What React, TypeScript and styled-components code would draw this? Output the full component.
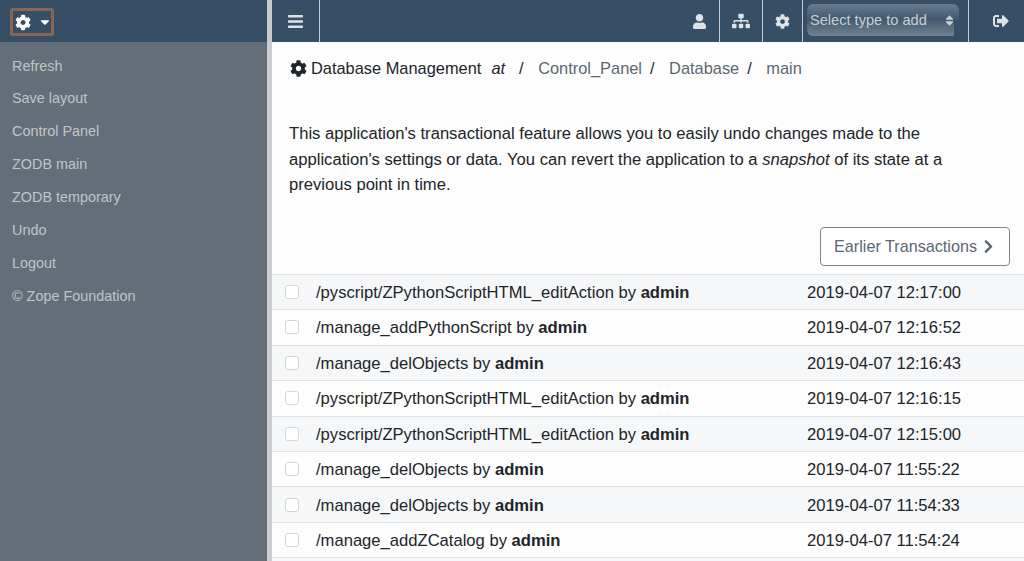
import React from "react";
import styled, { createGlobalStyle } from "styled-components";
import {
  FaBars,
  FaCaretDown,
  FaChevronRight,
  FaCog,
  FaSignOutAlt,
  FaSitemap,
  FaSort,
  FaUser,
} from "react-icons/fa";

const GlobalStyle = createGlobalStyle`
  html, body {
    margin: 0;
    height: 100%;
    overflow: hidden;
    background: #fff;
    font-family: "Liberation Sans", Arial, sans-serif;
    color: #212529;
  }
  * { box-sizing: border-box; }
`;

const Page = styled.div`
  display: flex;
  width: 1024px;
  height: 561px;
  overflow: hidden;
`;

const Sidebar = styled.aside`
  width: 267px;
  flex: none;
  background: #646e78;
`;

const SideHeader = styled.div`
  display: flex;
  align-items: center;
  height: 42px;
  padding: 2px 0 0 10px;
  background: #364e66;
`;

const MenuToggle = styled.button`
  display: flex;
  align-items: center;
  gap: 8px;
  width: 44px;
  height: 28px;
  padding: 0 0 0 2px;
  color: #fff;
  background: transparent;
  border: 3px solid #8a6552;
  border-radius: 3px;
`;

const SideMenu = styled.nav`
  display: flex;
  flex-direction: column;
  padding: 7.5px 0 0 12px;
`;

const SideLink = styled.a`
  height: 32.9px;
  font-size: 14.4px;
  line-height: 33px;
  color: #c1c5c9;
`;

const Splitter = styled.div`
  width: 5px;
  flex: none;
  background: #c9cbcd;
`;

const Main = styled.main`
  flex: 1;
  min-width: 0;
`;

const TopBar = styled.header`
  display: flex;
  align-items: stretch;
  height: 42px;
  background: #364e66;
  color: #dfe3e7;
`;

const BarButton = styled.div<{ $width: number; $divider?: boolean }>`
  display: flex;
  align-items: center;
  justify-content: center;
  width: ${(p) => p.$width}px;
  flex: none;
  font-size: 15px;
  border-right: ${(p) => (p.$divider ? "1px solid #c5ccd3" : "none")};
`;

const LogoutButton = styled(BarButton)`
  padding-left: 8px;
`;

const Spacer = styled.div`
  flex: 1;
`;

const TypeSelect = styled.div`
  position: relative;
  display: flex;
  align-items: center;
  justify-content: space-between;
  align-self: flex-start;
  width: 152px;
  height: 32px;
  margin: 4px 9px 0 4px;
  padding: 0 3px 0 3px;
  border-radius: 6px;
  font-size: 14.6px;
  color: #c9ced3;
  background: linear-gradient(#6a7c8f 0%, #3f566d 50%, #475d74 52%, #71828f 100%);

  &::after {
    content: "";
    position: absolute;
    right: 0;
    bottom: 0;
    width: 5px;
    height: 50%;
    background: #364e66;
  }

  svg {
    font-size: 13px;
  }
`;

const Content = styled.div`
  background: #fdfdfd;
`;

const Breadcrumbs = styled.div`
  display: flex;
  align-items: center;
  height: 53px;
  padding: 0 0 0 18px;
  font-size: 16.4px;
  color: #212529;

  svg {
    margin-right: 4px;
    font-size: 17px;
  }
`;

const Crumb = styled.span`
  color: #5b6771;
`;

const At = styled.em`
  margin: 0 6px 0 10px;
`;

const Slash = styled.span`
  margin: 0 14.5px 0 8px;
`;

const Intro = styled.p`
  margin: 26px 0 0;
  padding: 0 40px 0 17px;
  font-size: 16.62px;
  line-height: 25.6px;
`;

const Actions = styled.div`
  display: flex;
  justify-content: flex-end;
  padding: 29px 14px 8px 0;
`;

const EarlierButton = styled.button`
  display: flex;
  align-items: center;
  justify-content: space-between;
  width: 190px;
  height: 39px;
  padding: 0 13px;
  font: inherit;
  font-size: 16.2px;
  color: #5b6771;
  background: #fff;
  border: 1px solid #7d8790;
  border-radius: 4px;

  svg {
    font-size: 15px;
  }
`;

const Row = styled.div<{ $striped: boolean }>`
  display: flex;
  align-items: center;
  height: 35.45px;
  padding: 2px 0 0 13px;
  font-size: 16.6px;
  background: ${(p) => (p.$striped ? "#f6f7f8" : "#fdfdfd")};
  border-top: 1px solid #dfe2e5;
`;

const Check = styled.span`
  width: 14px;
  height: 14px;
  flex: none;
  margin-top: -2px;
  background: #fff;
  border: 1px solid #d4d7da;
  border-radius: 3px;
`;

const Action = styled.span`
  width: 491px;
  flex: none;
  margin-left: 17px;
`;

const transactions = [
  ["/pyscript/ZPythonScriptHTML_editAction", "2019-04-07 12:17:00"],
  ["/manage_addPythonScript", "2019-04-07 12:16:52"],
  ["/manage_delObjects", "2019-04-07 12:16:43"],
  ["/pyscript/ZPythonScriptHTML_editAction", "2019-04-07 12:16:15"],
  ["/pyscript/ZPythonScriptHTML_editAction", "2019-04-07 12:15:00"],
  ["/manage_delObjects", "2019-04-07 11:55:22"],
  ["/manage_delObjects", "2019-04-07 11:54:33"],
  ["/manage_addZCatalog", "2019-04-07 11:54:24"],
  ["", ""],
];

const menu = [
  "Refresh",
  "Save layout",
  "Control Panel",
  "ZODB main",
  "ZODB temporary",
  "Undo",
  "Logout",
  "© Zope Foundation",
];

const App: React.FC = () => (
  <Page>
    <GlobalStyle />
    <Sidebar>
      <SideHeader>
        <MenuToggle>
          <FaCog size={19} />
          <FaCaretDown size={14} />
        </MenuToggle>
      </SideHeader>
      <SideMenu>
        {menu.map((item) => (
          <SideLink key={item}>{item}</SideLink>
        ))}
      </SideMenu>
    </Sidebar>
    <Splitter />
    <Main>
      <TopBar>
        <BarButton $width={48} $divider>
          <FaBars size={17} />
        </BarButton>
        <Spacer />
        <BarButton $width={40} $divider>
          <FaUser />
        </BarButton>
        <BarButton $width={43} $divider>
          <FaSitemap size={18} />
        </BarButton>
        <BarButton $width={40} $divider>
          <FaCog />
        </BarButton>
        <TypeSelect>
          Select type to add
          <FaSort />
        </TypeSelect>
        <BarButton $width={1} $divider />
        <LogoutButton $width={55}>
          <FaSignOutAlt size={16} />
        </LogoutButton>
      </TopBar>
      <Content>
        <Breadcrumbs>
          <FaCog />
          Database Management
          <At>at</At>
          <Slash>/</Slash>
          <Crumb>Control_Panel</Crumb>
          <Slash>/</Slash>
          <Crumb>Database</Crumb>
          <Slash>/</Slash>
          <Crumb>main</Crumb>
        </Breadcrumbs>
        <Intro>
          This application's transactional feature allows you to easily undo changes made to the
          application's settings or data. You can revert the application to a <em>snapshot</em> of
          its state at a previous point in time.
        </Intro>
        <Actions>
          <EarlierButton>
            Earlier Transactions
            <FaChevronRight />
          </EarlierButton>
        </Actions>
        {transactions.map(([path, time], index) => (
          <Row key={index} $striped={index % 2 === 0}>
            {path && <Check />}
            {path && (
              <Action>
                {path} by <strong>admin</strong>
              </Action>
            )}
            {time}
          </Row>
        ))}
      </Content>
    </Main>
  </Page>
);

export default App;
